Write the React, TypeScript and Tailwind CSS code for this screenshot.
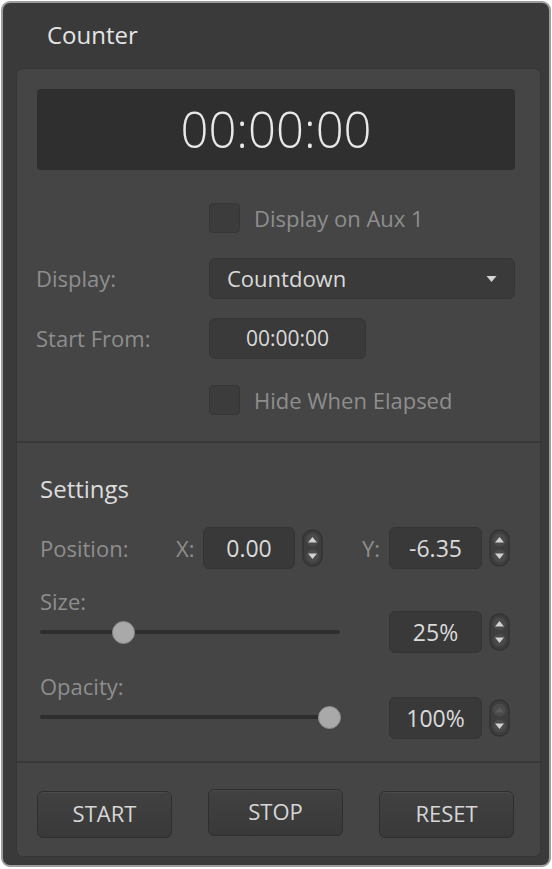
import React from "react";

const font = { fontFamily: '"Open Sans", "Noto Sans", sans-serif' };

function Checkbox({ label }: { label: string }) {
  return (
    <div className="flex items-center pl-[192px]">
      <div className="h-[30px] w-[31px] rounded-[4px] border border-[#363636] bg-[#3c3c3c]" />
      <span className="ml-[14px] text-[22px] leading-[30px] text-[#8e8e8e]">{label}</span>
    </div>
  );
}

function Stepper({ upDisabled = false }: { upDisabled?: boolean }) {
  return (
    <svg width="21" height="38" viewBox="0 0 21 38" className="shrink-0">
      <rect x="1" y="1" width="19" height="36" rx="9.5" fill="#3e3e3e" stroke="#333333" strokeWidth="1.5" />
      <circle cx="10.5" cy="11" r="6.5" fill="#4a4a4a" />
      <circle cx="10.5" cy="27" r="6.5" fill="#4a4a4a" />
      <path d="M6 13.5 L10.5 8 L15 13.5 Z" fill={upDisabled ? "#5c5c5c" : "#d2d2d2"} />
      <path d="M6 24.5 L10.5 30 L15 24.5 Z" fill="#d2d2d2" />
    </svg>
  );
}

function NumBox({ value, w = "w-[93px]" }: { value: string; w?: string }) {
  return (
    <div
      className={`flex h-[42px] ${w} shrink-0 items-center justify-center rounded-[6px] border border-[#343434] bg-[#393939] text-[23px] leading-none text-[#dadada]`}
    >
      {value}
    </div>
  );
}

function Slider({ pos }: { pos: number }) {
  return (
    <div className="relative flex h-[36px] w-[300px] items-center">
      <div className="h-[4px] w-full rounded-full bg-[#2e2e2e]" />
      <div
        className="absolute top-[7px] h-[23px] w-[23px] rounded-full border border-[#8a8a8a] bg-[#a9a9a9]"
        style={{ left: pos - 11.5 }}
      />
    </div>
  );
}

function Btn({ label, className = "" }: { label: string; className?: string }) {
  return (
    <div
      className={`flex h-[47px] w-[135px] items-center justify-center rounded-[6px] border border-[#2e2e2e] bg-gradient-to-b from-[#414141] to-[#393939] pb-[3px] text-[22px] text-[#d6d6d6] shadow-[inset_0_1px_0_#4a4a4a] ${className}`}
    >
      {label}
    </div>
  );
}

export default function App() {
  return (
    <div className="h-[869px] w-[552px] bg-white pl-[1px] pt-[1px]" style={font}>
      <div className="flex h-[866px] w-[550px] flex-col rounded-[9px] border-2 border-[#9d9d9d] bg-[#3a3a3a]">
        {/* Header */}
        <div className="flex h-[65px] items-center pl-[44px] pb-[2px]">
          <span className="text-[24px] text-[#e4e4e4]">Counter</span>
        </div>

        {/* Inner panel */}
        <div className="ml-[13px] flex h-[789px] w-[525px] flex-col rounded-[7px] border border-[#363636] bg-[#454545]">
          {/* Timer */}
          <div className="ml-[20px] mt-[20px] flex h-[81px] w-[478px] items-center justify-center rounded-[4px] bg-[#2f2f2f]">
            <span className="text-[49px] font-light leading-none text-[#e8e8e8]">00:00:00</span>
          </div>

          <div className="mt-[33px]">
            <Checkbox label="Display on Aux 1" />
          </div>

          <div className="mt-[25px] flex items-center pl-[19px]">
            <span className="w-[173px] text-[22px] text-[#8e8e8e]">Display:</span>
            <div className="flex h-[41px] w-[306px] items-center justify-between rounded-[6px] border border-[#353535] bg-[#3a3a3a] pl-[17px] pr-[17px]">
              <span className="text-[22px] text-[#dadada]">Countdown</span>
              <svg width="11" height="8" viewBox="0 0 11 8">
                <path d="M0.5 1 L10.5 1 L5.5 7 Z" fill="#d4d4d4" />
              </svg>
            </div>
          </div>

          <div className="mt-[19px] flex items-center pl-[19px]">
            <span className="w-[173px] text-[22px] text-[#8e8e8e]">Start From:</span>
            <div className="flex h-[41px] w-[157px] items-center justify-center rounded-[6px] border border-[#353535] bg-[#3a3a3a]">
              <span className="text-[21px] text-[#dadada]">00:00:00</span>
            </div>
          </div>

          <div className="mt-[26px]">
            <Checkbox label="Hide When Elapsed" />
          </div>

          <div className="mt-[26px] h-[2px] w-full bg-[#383838]" />

          {/* Settings */}
          <div className="flex flex-col pl-[23px]">
            <div className="mt-[31px] text-[24px] leading-[30px] text-[#dcdcdc]">Settings</div>

            <div className="mt-[23px] flex items-center">
              <span className="w-[136px] text-[22px] text-[#8e8e8e]">Position:</span>
              <span className="w-[27px] text-[22px] text-[#8e8e8e]">X:</span>
              <NumBox value="0.00" w="w-[92px]" />
              <div className="ml-[7px]">
                <Stepper />
              </div>
              <span className="ml-[39px] w-[27px] text-[22px] text-[#8e8e8e]">Y:</span>
              <NumBox value="-6.35" />
              <div className="ml-[7px]">
                <Stepper />
              </div>
            </div>

            <div className="mt-[19px] flex items-start">
              <div className="flex flex-col">
                <span className="text-[22px] leading-[26px] text-[#8e8e8e]">Size:</span>
                <Slider pos={83} />
              </div>
              <div className="ml-[49px] mt-[23px] flex items-center">
                <NumBox value="25%" />
                <div className="ml-[7px]">
                  <Stepper />
                </div>
              </div>
            </div>

            <div className="mt-[20px] flex items-start">
              <div className="flex flex-col">
                <span className="text-[22px] leading-[26px] text-[#8e8e8e]">Opacity:</span>
                <Slider pos={289} />
              </div>
              <div className="ml-[49px] mt-[24px] flex items-center">
                <NumBox value="100%" />
                <div className="ml-[7px]">
                  <Stepper upDisabled />
                </div>
              </div>
            </div>
          </div>

          <div className="mt-[22px] h-[2px] w-full bg-[#383838]" />

          <div className="mt-[26px] flex items-start gap-[36px] pl-[20px]">
            <Btn label="START" className="mt-[2px]" />
            <Btn label="STOP" />
            <Btn label="RESET" className="mt-[2px]" />
          </div>
        </div>
      </div>
    </div>
  );
}
